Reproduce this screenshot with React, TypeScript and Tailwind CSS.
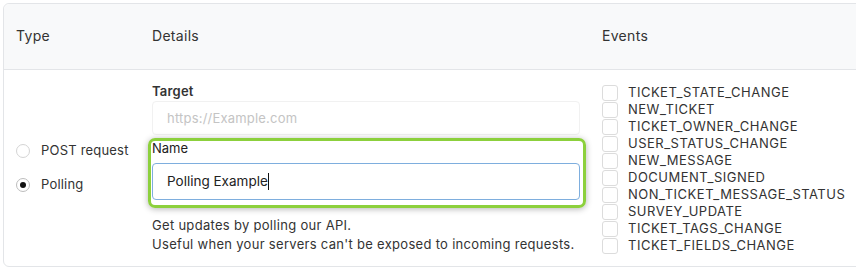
import React from "react";

const events = [
  "TICKET_STATE_CHANGE",
  "NEW_TICKET",
  "TICKET_OWNER_CHANGE",
  "USER_STATUS_CHANGE",
  "NEW_MESSAGE",
  "DOCUMENT_SIGNED",
  "NON_TICKET_MESSAGE_STATUS",
  "SURVEY_UPDATE",
  "TICKET_TAGS_CHANGE",
  "TICKET_FIELDS_CHANGE",
];

export default function App() {
  return (
    <div
      className="w-[856px] h-[270px] overflow-hidden bg-white pt-[3px] pl-[3px]"
      style={{ fontFamily: "Inter, 'Noto Sans', sans-serif" }}
    >
      <div className="w-[870px] border border-[#e3e5e8] rounded-[6px] text-[#333]">
        <div className="grid grid-cols-[136px_450px_1fr] h-[66px] pb-[3px] bg-[#f8f9fa] border-b border-[#e3e5e8] rounded-t-[6px] items-center text-[14px] tracking-[0.3px]">
          <div className="pl-[12px]">Type</div>
          <div className="pl-[12px]">Details</div>
          <div className="pl-[12px]">Events</div>
        </div>
        <div className="grid grid-cols-[136px_450px_1fr] h-[196px]">
          <div className="flex flex-col justify-center pl-[12px] gap-[15px] text-[13px] tracking-[0.2px]">
            <label className="flex items-center gap-[11px] h-[19px]">
              <span className="w-[14px] h-[14px] rounded-full border border-[#d4d4d4] bg-white" />
              <span>POST request</span>
            </label>
            <label className="flex items-center gap-[11px] h-[19px]">
              <span className="w-[14px] h-[14px] rounded-full border border-[#bdbdbd] bg-white flex items-center justify-center">
                <span className="w-[6px] h-[6px] rounded-full bg-[#111]" />
              </span>
              <span>Polling</span>
            </label>
          </div>
          <div className="pl-[12px] pr-[10px] pt-[11px] text-[13px]">
            <div className="font-semibold h-[20px] leading-[20px] tracking-[0.2px]">Target</div>
            <div className="h-[34px] pt-[2px] border border-[#f1f1f1] rounded-[4px] flex items-center pl-[14px] text-[#c4c4c4] tracking-[0.2px]">
              https://Example.com
            </div>
            <div className="relative mt-[3px]">
              <div className="absolute top-0 left-[-4px] right-[-6px] bottom-[-8px] border-[3px] border-[#8cd03c] rounded-[7px] shadow-[0_1px_6px_rgba(0,0,0,0.3)] pointer-events-none" />
              <div className="h-[20px] leading-[20px] text-[#222]">Name</div>
              <div className="mt-[5px] h-[37px] border border-[#7eaede] rounded-[4px] flex items-center pl-[14px] text-[13.5px] text-[#222]">
                Polling Example
                <span className="inline-block w-[1px] h-[17px] bg-[#111]" />
              </div>
            </div>
            <div className="mt-[16px] leading-[19px] text-[13px] tracking-[0.3px]">
              <div>Get updates by polling our API.</div>
              <div>Useful when your servers can't be exposed to incoming requests.</div>
            </div>
          </div>
          <div className="pl-[12px] pt-[14px]">
            {events.map((e) => (
              <div key={e} className="flex items-center h-[17px]">
                <span className="w-[16px] h-[16px] border border-[#dcdcdc] rounded-[3px] bg-white" />
                <span className="ml-[10px] text-[13px] tracking-[0.5px] text-[#333]">{e}</span>
              </div>
            ))}
          </div>
        </div>
      </div>
    </div>
  );
}
